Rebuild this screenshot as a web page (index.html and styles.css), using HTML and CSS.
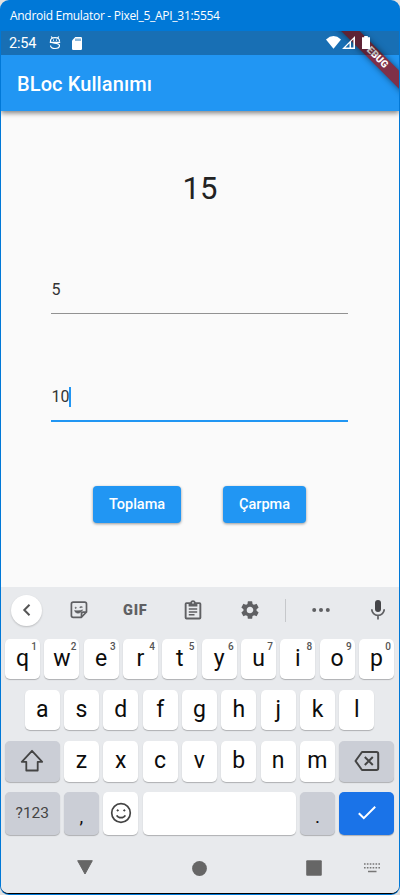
FILE: index.html
```html
<!DOCTYPE html>
<html lang="tr">
<head>
<meta charset="utf-8">
<title>BLoc Kullanımı</title>
<link rel="stylesheet" href="styles.css">
</head>
<body>
<div class="window">
  <div class="titlebar">Android Emulator - Pixel_5_API_31:5554</div>
  <div class="screen">
    <header class="header">
      <div class="statusbar">
        <span class="clock">2:54</span>
        <svg class="st-debug" width="12" height="14" viewBox="0 0 12 14" fill="none" stroke="#fff" stroke-width="1.2"><path d="M1.500 5.500C1.200 3 3 1.600 6 1.600s4.800 1.400 4.500 3.900M1.500 5.500C1.500 8 10.500 6 10.500 9.500c0 2-2 3-4.500 3s-4.500-1-4.500-3M.8 6.300h10.400M2.200.500l1 1.300M9.800.500l-1 1.300"/><path d="M4 4.200h1M7 4.200h1"/></svg>
        <svg class="st-sd" width="10" height="13" viewBox="0 0 10 13"><path fill="#fff" d="M3.300 0h5.400Q10 0 10 1.300v10.400Q10 13 8.700 13H1.300Q0 13 0 11.700V3.500z"/><path stroke="#1b70b6" d="M4 1.500v2.500M6 1.500v2.500M8 1.500v2.500"/></svg>
        <span class="grow"></span>
        <svg class="st-wifi" width="15" height="13" viewBox="0 0 15 13"><path fill="#fff" d="M7.500 12.800 0 3.500Q7.500-3.300 15 3.500z"/></svg>
        <svg class="st-cell" width="13" height="13" viewBox="0 0 13 13"><path fill="#fff" fill-rule="evenodd" d="M13 0v13H0zM7.500 7.300 3.400 11.400h4.100zM9 5.500v5.900h2.400V3.300z"/></svg>
        <svg class="st-batt" width="8" height="13" viewBox="0 0 8 13"><path fill="#fff" d="M2.200 0h3.600v1.300H8V13H0V1.300h2.200z"/></svg>
      </div>
      <div class="ribbon"><span>DEBUG</span></div>
      <h1 class="appbar">BLoc Kullanımı</h1>
    </header>

    <main class="content">
      <div class="result">15</div>
      <div class="field">5</div>
      <div class="field focused">10<i class="caret"></i></div>
      <div class="actions"><button class="btn add">Toplama</button><button class="btn mul">Çarpma</button></div>
    </main>

    <section class="keyboard">
      <div class="toolbar">
        <span class="back"><svg width="24" height="24" viewBox="0 0 24 24" fill="none" stroke="#555" stroke-width="2"><path d="m14.500 6.800-5.200 5.200 5.200 5.200"/></svg></span>
        <svg class="t-sticker" width="18" height="18" viewBox="0 0 18 18" fill="none" stroke="#5f6063" stroke-width="1.700"><path d="M16.500 11V3q0-1.800-1.800-1.800H3.200Q1.400 1.200 1.400 3v11.600q0 1.800 1.800 1.800h8z"/><path d="M16.500 11.200h-3.300q-1.700 0-1.700 1.700v3.300"/><path d="M4.500 9.500c1 3.700 6.200 3.700 8.200-.7-2.500 1-4.800 1-8.200.7z" fill="#5f6063" stroke-width=".5"/><circle cx="5.700" cy="6.800" r=".6" fill="#5f6063" stroke-width=".7"/><path d="M9.800 6.800q1.300-1.500 2.600-.3" stroke-width="1.300"/></svg>
        <span class="gif">GIF</span>
        <svg class="t-clip" width="18" height="20" viewBox="0 0 18 20"><path fill="#5f6063" fill-rule="evenodd" d="M2.500 2.200h3.700a3 3 0 0 1 5.600 0h3.700q1.800 0 1.800 1.800v13.700q0 1.800-1.800 1.800h-13Q.7 19.500.7 17.700V4q0-1.800 1.800-1.800zM2.600 4.100v13.500h12.800V4.100h-2v2.400H4.600V4.100zM9 1.900a.9.9 0 1 0 0 1.800.9.900 0 0 0 0-1.800z"/><path stroke="#5f6063" stroke-width="1.500" d="M4.800 9h8.400M4.800 11.900h8.400M4.800 14.800h5.700"/></svg>
        <svg class="t-gear" width="22" height="22" viewBox="0 0 24 24"><path fill="#5f6063" d="M19.140 12.940c.04-.3.060-.61.060-.94 0-.32-.02-.64-.07-.94l2.030-1.580a.49.490 0 0 0 .12-.61l-1.920-3.320a.488.488 0 0 0-.59-.22l-2.390.96c-.5-.38-1.030-.7-1.620-.94l-.36-2.540a.484.484 0 0 0-.48-.41h-3.840c-.24 0-.43.17-.47.410l-.36 2.540c-.59.240-1.130.57-1.620.94l-2.390-.96c-.22-.08-.47 0-.59.220L2.740 8.870c-.12.210-.08.470.12.610l2.030 1.580c-.05.300-.09.630-.09.940s.02.640.07.940l-2.030 1.580a.49.490 0 0 0-.12.610l1.920 3.320c.12.220.37.290.59.220l2.390-.96c.5.380 1.030.7 1.620.94l.36 2.540c.05.240.24.410.48.410h3.840c.24 0 .44-.17.470-.41l.36-2.540c.59-.24 1.130-.56 1.620-.94l2.390.96c.22.080.47 0 .59-.22l1.920-3.320c.12-.22.070-.47-.12-.61zM12 15.600A3.610 3.610 0 0 1 8.400 12c0-1.980 1.620-3.600 3.600-3.600s3.600 1.620 3.600 3.600-1.620 3.600-3.600 3.600z"/></svg>
        <span class="divider"></span>
        <svg class="t-more" width="18" height="4" viewBox="0 0 18 4" fill="#5f6063"><circle cx="2.200" cy="2" r="2"/><circle cx="9" cy="2" r="2"/><circle cx="15.800" cy="2" r="2"/></svg>
        <svg class="t-mic" width="14" height="20" viewBox="0 0 14 20"><rect x="4" y="0" width="6" height="12" rx="3" fill="#444548"/><path d="M.8 9.300a6.200 6 0 0 0 12.400 0M7 15.500v4" fill="none" stroke="#5f6063" stroke-width="1.700"/></svg>
      </div>
      <div class="row r1">
        <span class="key">q<sup>1</sup></span><span class="key">w<sup>2</sup></span><span class="key">e<sup>3</sup></span><span class="key">r<sup>4</sup></span><span class="key">t<sup>5</sup></span><span class="key">y<sup>6</sup></span><span class="key">u<sup>7</sup></span><span class="key">i<sup>8</sup></span><span class="key">o<sup>9</sup></span><span class="key">p<sup>0</sup></span>
      </div>
      <div class="row r2">
        <span class="key">a</span><span class="key">s</span><span class="key">d</span><span class="key">f</span><span class="key">g</span><span class="key">h</span><span class="key">j</span><span class="key">k</span><span class="key">l</span>
      </div>
      <div class="row r3">
        <span class="key wide dark"><svg width="24" height="24" viewBox="0 0 24 24" fill="none" stroke="#444" stroke-width="1.800" stroke-linejoin="round"><path d="M12 1.800 1.800 12.800h4.500v8.700h11.400v-8.700h4.500z"/></svg></span><span class="key">z</span><span class="key">x</span><span class="key">c</span><span class="key">v</span><span class="key">b</span><span class="key">n</span><span class="key">m</span><span class="key wide dark"><svg width="26" height="22" viewBox="0 0 26 22" fill="none" stroke="#444" stroke-width="2" stroke-linejoin="round"><path d="M8 2h14.500q1.700 0 1.700 1.700v14.600q0 1.700-1.700 1.700H8L1.500 11z"/><path d="m10.800 7 8 8m0-8-8 8"/></svg></span>
      </div>
      <div class="row r4">
        <span class="key wide dark sym">?123</span><span class="key dark punct">,</span><span class="key"><svg width="22" height="22" viewBox="0 0 22 22" fill="none" stroke="#444" stroke-width="1.700"><circle cx="11" cy="11" r="9.300"/><path d="M6.700 13.300c1.800 3.200 6.800 3.200 8.600 0"/><circle cx="7.700" cy="8.400" r=".7" fill="#444" stroke-width="1"/><circle cx="14.300" cy="8.400" r=".7" fill="#444" stroke-width="1"/></svg></span><span class="key space"></span><span class="key dark punct">.</span><span class="key wide enter"><svg width="20" height="16" viewBox="0 0 20 16" fill="none" stroke="#fff" stroke-width="2"><path d="m1.800 8.200 5 5L18.200 1.800"/></svg></span>
      </div>
      <nav class="navbar">
        <svg class="n-back" width="16" height="15" viewBox="0 0 16 15"><path fill="#666" stroke="#666" stroke-linejoin="round" d="M.7.700h14.600L8 14z"/></svg>
        <svg class="n-home" width="15" height="15" viewBox="0 0 15 15"><circle cx="7.500" cy="7.500" r="7.400" fill="#666"/></svg>
        <svg class="n-app" width="16" height="16" viewBox="0 0 16 16"><rect x=".2" y=".2" width="15.600" height="15.600" rx="1" fill="#666"/></svg>
        <svg class="n-kb" width="16" height="10" viewBox="0 0 16 10" stroke="#777" stroke-width="1.500"><path d="M0 1h16M0 4.700h16" stroke-dasharray="1.600 1.280"/><path d="M4 8.500h8.500"/></svg>
      </nav>
    </section>
  </div>
</div>
</body>
</html>
```
FILE: styles.css
```css
* { box-sizing: border-box; }
body {
  margin: 0;
  background: #e4e2e0;
  font-family: Roboto, "Noto Sans", sans-serif;
}
svg { display: block; flex: none; }
.window {
  width: 400px;
  height: 895px;
  padding: 0 1px 1px;
  background: #0078d7;
  border-radius: 9px;
  overflow: hidden;
}
.titlebar {
  height: 31px;
  padding-left: 9px;
  line-height: 32px;
  font-family: "Open Sans", "Noto Sans", sans-serif;
  font-size: 12px;
  letter-spacing: -0.29px;
  color: #fff;
}
.screen {
  height: 863px;
  border-bottom: 1px solid #000;
  border-radius: 0 0 8px 8px;
  overflow: hidden;
  background: #fafafa;
}
.header {
  position: relative;
  height: 80px;
  background: #2196f3;
  box-shadow: 0 2px 5px rgba(0, 0, 0, .5);
}
.statusbar {
  position: relative;
  z-index: 2;
  display: flex;
  height: 24px;
  padding-left: 8px;
  background: rgba(0, 0, 0, .26);
  color: #fff;
}
.clock { width: 40px; font-size: 14.500px; line-height: 25px; letter-spacing: -.2px; }
.st-debug { margin-top: 5px; }
.st-sd { margin: 6px 0 0 11px; }
.grow { flex: 1; }
.st-wifi { margin-top: 5px; }
.st-cell { margin: 5px 0 0 1px; }
.st-batt { margin: 5px 29px 0 7px; }
.ribbon {
  position: absolute;
  inset: 0;
  z-index: 1;
  overflow: hidden;
}
.ribbon span {
  position: absolute;
  left: 314px;
  top: 18px;
  width: 120px;
  height: 12.500px;
  transform: rotate(45deg);
  background: #7f3048;
  box-shadow: 0 0 6px rgba(0, 0, 0, .5);
  color: #fff;
  font-size: 10px;
  font-weight: 900;
  line-height: 12.500px;
  text-align: center;
}
.appbar {
  margin: 0;
  padding-left: 16px;
  font-size: 20px;
  font-weight: 500;
  letter-spacing: .1px;
  line-height: 58px;
  color: #fff;
}
.content { height: 476px; padding: 56px 50px 0; color: #222; }
.result {
  height: 44px;
  font-size: 31px;
  line-height: 44px;
  text-align: center;
}
.field {
  display: flex;
  width: 297px;
  height: 49px;
  margin-top: 54px;
  padding-left: .5px;
  border-bottom: 1px solid #929292;
  font-size: 16px;
  line-height: 50px;
  color: #333;
}
.focused { margin-top: 58px; height: 50px; border-bottom: 2px solid #2196f3; line-height: 50px; }
.caret { width: 2px; height: 20px; margin-top: 14.500px; background: #2196f3; }
.actions { display: flex; gap: 42px; padding: 64px 0 0 42px; }
.btn {
  height: 37px;
  padding: 0;
  border: 0;
  border-radius: 4px;
  background: #2196f3;
  box-shadow: 0 1px 3px rgba(0, 0, 0, .4);
  color: #fff;
  font: 500 14.500px/37px Roboto, sans-serif;
}
.add { width: 88px; }
.mul { width: 83px; }
.keyboard { height: 306px; background: #e8eaed; }
.toolbar { display: flex; align-items: center; height: 51.500px; padding: 0 13px 5px 10px; }
.back {
  display: grid;
  place-items: center;
  width: 31px;
  height: 31px;
  border-radius: 50%;
  background: #fff;
  box-shadow: 0 1px 2px rgba(0, 0, 0, .2);
}
.t-sticker { margin-left: 28px; }
.gif {
  width: 26px;
  margin-left: 35px;
  color: #5f6063;
  font-size: 14.500px;
  font-weight: 900;
  letter-spacing: .8px;
}
.t-clip { margin-left: 35px; margin-bottom: 1px; }
.t-gear { margin-left: 37px; }
.divider { width: 1px; height: 23px; margin-left: 24px; background: #c6c8cb; }
.t-more { margin-left: 26px; }
.t-mic { margin-left: auto; margin-right: 1px; }
.row { display: flex; gap: 4.330px; width: 389px; margin-left: 4px; }
.r1, .r2 { height: 40.500px; margin-bottom: 10.500px; }
.r2 { padding-left: 19.700px; }
.r3 { height: 41.500px; margin-bottom: 9.500px; }
.r4 { height: 43px; }
.key {
  position: relative;
  display: flex;
  flex: none;
  align-items: center;
  justify-content: center;
  width: 35px;
  border-radius: 5px;
  background: #fff;
  box-shadow: 0 1px 1px rgba(0, 0, 0, .25);
  color: #0c0c0c;
  font-size: 23px;
  line-height: 40px;
}
.key sup {
  position: absolute;
  top: 2px;
  right: 3px;
  color: #555;
  font-size: 10px;
  font-weight: 500;
  line-height: 12px;
}
.wide { width: 54.600px; }
.dark { background: #cbced6; }
.sym { color: #444; font-size: 15.500px; }
.punct { padding-top: 7px; font-size: 19px; }
.space { width: 153px; }
.enter { background: #1a73e8; }
.navbar { display: flex; align-items: center; height: 58px; padding: 9px 0 0 76px; }
.n-back { margin-bottom: 2px; }
.n-home { margin-left: 99px; }
.n-app { margin-left: 99px; }
.n-kb { margin-left: 41.500px; }
```
